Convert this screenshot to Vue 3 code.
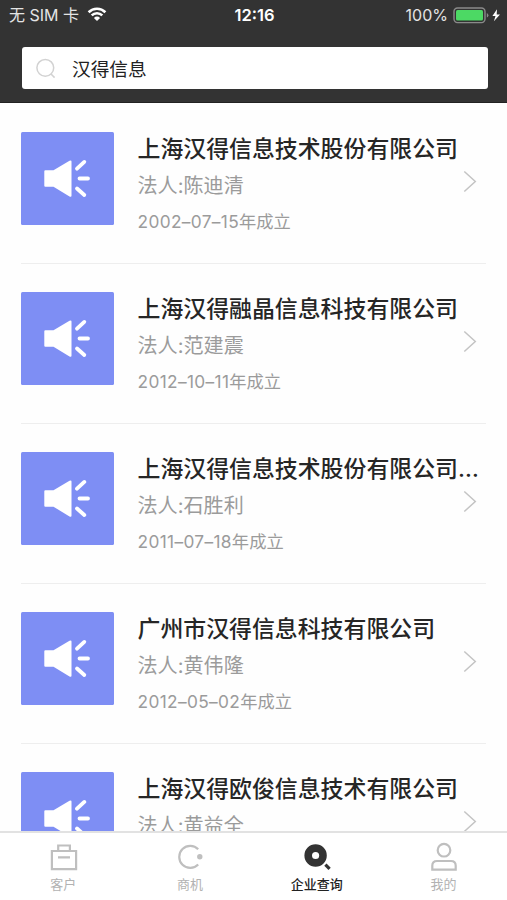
<script setup>
import { ref, reactive } from "vue";

//data
const companies = reactive([
	{ name: "上海汉得信息技术股份有限公司", person: "陈迪清", date: "2002–07–15" },
	{ name: "上海汉得融晶信息科技有限公司", person: "范建震", date: "2012–10–11" },
	{ name: "上海汉得信息技术股份有限公司…", person: "石胜利", date: "2011–07–18" },
	{ name: "广州市汉得信息科技有限公司", person: "黄伟隆", date: "2012–05–02" },
	{ name: "上海汉得欧俊信息技术有限公司", person: "黄益全", date: "" },
]);
const tabs = [
	{ key: "customer", text: "客户" },
	{ key: "chance", text: "商机" },
	{ key: "query", text: "企业查询" },
	{ key: "mine", text: "我的" },
];

//variables
const keyword = ref("汉得信息");
const activeTab = ref("query");
</script>

<template>
	<div class="page">
		<header>
			<div class="status">
				<div class="carrier">
					<span>无 SIM 卡</span>
					<svg class="wifi" width="20" height="15" viewBox="0 0 20 15">
						<path d="M1.6 5.2a12 12 0 0 1 16.8 0M4.7 8.4a7.6 7.6 0 0 1 10.6 0" />
						<path class="solid" d="M6.9 10.9a4.4 4.4 0 0 1 6.2 0L10 14z" />
					</svg>
				</div>
				<b class="time">12:16</b>
				<div class="power">
					<span>100%</span>
					<svg width="47" height="17" viewBox="0 0 47 17">
						<rect x="1" y="1" width="31" height="14.6" rx="3.5" fill="none" stroke="#8a8a8a" stroke-width="1.4" />
						<rect x="3" y="3" width="27" height="10.6" rx="1.5" fill="#4cd964" />
						<path d="M33.8 6v4.6q1.6-.7 1.6-2.3T33.8 6z" fill="#8a8a8a" />
						<path d="M44 2.2 39.4 9h3.1l-1.6 5.2L47 7.4h-3.3z" fill="#fff" />
					</svg>
				</div>
			</div>
			<div class="search">
				<svg width="20" height="21" viewBox="0 0 20 21">
					<circle cx="9.3" cy="9.8" r="8.4" />
					<path d="M15 16l3.6 3.6" />
				</svg>
				<input v-model="keyword" type="text" />
			</div>
		</header>
		<main>
			<div v-for="(company, index) in companies" :key="index" class="company">
				<svg class="logo" width="93" height="93" viewBox="0 0 93 93">
					<rect width="93" height="93" rx="1.5" fill="#7e8ef4" />
					<path d="M24.3 38.3h8.2L48.5 28.8q2-1 2 .8v34.1q0 1.8-2 .8L32.5 54.7h-8.2q-1 0-1-1V39.3q0-1 1-1z" fill="#fff" />
					<path class="ray" d="M56 36.7l7.3-6.8M58.5 46.5H67M56 56.5l7.3 6.5" />
				</svg>
				<div class="info">
					<div class="name">{{ company.name }}</div>
					<div class="person">法人:{{ company.person }}</div>
					<div v-if="company.date" class="date"><span class="day">{{ company.date }}</span>年成立</div>
				</div>
				<svg class="arrow" width="14" height="23" viewBox="0 0 14 23">
					<path d="M1.3 1.5l11 10-11 10" />
				</svg>
			</div>
		</main>
		<nav>
			<div
				v-for="tab in tabs"
				:key="tab.key"
				:class="['tab', { active: activeTab === tab.key }]"
				@click="activeTab = tab.key"
			>
				<svg width="30" height="30" viewBox="0 0 30 30">
					<g v-if="tab.key === 'customer'">
						<path d="M3.9 9h24.2v18.2H3.9zM10.2 9V3.5h11.7V9M10 15.3h12" />
					</g>
					<g v-else-if="tab.key === 'chance'">
						<path d="M23.2 7.3a11 11 0 1 0 0 15.2" />
						<circle class="solid" cx="24.8" cy="14.8" r="2.7" />
					</g>
					<g v-else-if="tab.key === 'query'">
						<circle cx="13.6" cy="13.5" r="7.4" stroke-width="7.6" />
						<path d="M23.4 22.6l4.2 4.2" stroke-width="3.2" />
					</g>
					<g v-else>
						<circle cx="15" cy="8.2" r="6.3" />
						<path d="M3.3 27.7v-4q0-4.7 4.7-4.7h14q4.7 0 4.7 4.7v4z" />
					</g>
				</svg>
				<span>{{ tab.text }}</span>
			</div>
		</nav>
	</div>
</template>

<style>
body {
	background: #fff;
}
</style>

<style scoped>
.page {
	display: flex;
	flex-direction: column;
	height: 900px;
	overflow: hidden;
	background: #fefefe;
	font-family: Inter, "Noto Sans CJK SC", sans-serif;
}
header {
	flex: none;
	box-sizing: border-box;
	height: 103px;
	background: #333;
	border-bottom: 1px solid #222;
}
.status {
	display: grid;
	grid-template-columns: 1fr auto 1fr;
	align-items: center;
	height: 30px;
	padding: 0 7px 0 9px;
	color: #e4e4e4;
	font-size: 16px;
}
.carrier,
.power {
	display: flex;
	align-items: center;
}
.carrier {
	gap: 8px;
}
.carrier span {
	margin-top: -2px;
}
.wifi {
	margin-top: -2px;
}
.wifi path {
	fill: none;
	stroke: #fff;
	stroke-width: 2.6;
}
.wifi .solid {
	fill: #fff;
	stroke: none;
}
.time {
	color: #fff;
	font-size: 16.5px;
	font-weight: 600;
}
.power {
	justify-content: flex-end;
	gap: 5px;
}
.search {
	display: flex;
	align-items: center;
	gap: 16px;
	box-sizing: border-box;
	height: 42px;
	margin: 17px 19px 0 22px;
	padding-left: 14px;
	border-radius: 3px;
	background: #fff;
}
.search svg {
	fill: none;
	stroke: #d2d2d2;
	stroke-width: 1.5;
}
.search input {
	flex: 1;
	padding: 0 0 2px;
	border: 0;
	outline: 0;
	background: none;
	color: #222;
	font: 18.7px Inter, "Noto Sans CJK SC", sans-serif;
}
main {
	flex: 1;
	min-height: 0;
	overflow: hidden;
}
.company {
	display: flex;
	box-sizing: border-box;
	height: 160px;
	margin: 0 21px;
	padding-top: 28px;
	border-bottom: 1px solid #eee;
}
.company:first-child {
	height: 161px;
	padding-top: 29px;
}
.logo {
	flex: none;
}
.ray {
	fill: none;
	stroke: #fff;
	stroke-width: 3.8;
	stroke-linecap: round;
}
.info {
	flex: 1;
	min-width: 0;
	margin-left: 23.5px;
	white-space: nowrap;
}
.name {
	height: 36px;
	line-height: 34px;
	color: #262626;
	font-size: 22.9px;
	font-weight: 500;
}
.person {
	height: 36px;
	line-height: 37px;
	color: #9b9b9b;
	font-size: 20.1px;
}
.date {
	line-height: 36px;
	color: #9b9b9b;
	font-size: 17.3px;
}
.day {
	letter-spacing: 0.35px;
}
.arrow {
	flex: none;
	margin: 37.5px 9px 0 -24px;
	fill: none;
	stroke: #c4c4c4;
	stroke-width: 1.5;
}
nav {
	display: flex;
	flex: none;
	box-sizing: border-box;
	height: 69px;
	border-top: 2px solid #e2e2e2;
	background: #fff;
}
.tab {
	display: flex;
	flex: 1;
	flex-direction: column;
	align-items: center;
	padding-top: 9px;
	color: #b2b2b2;
	font-size: 13px;
	line-height: 20px;
}
.tab svg {
	flex: none;
	margin-bottom: 2px;
	fill: none;
	stroke: #bfbfbf;
	stroke-width: 2.2;
}
.tab .solid {
	fill: #bfbfbf;
	stroke: none;
}
.tab.active {
	color: #222;
	font-weight: 500;
}
.tab.active svg {
	stroke: #333;
}
</style>
